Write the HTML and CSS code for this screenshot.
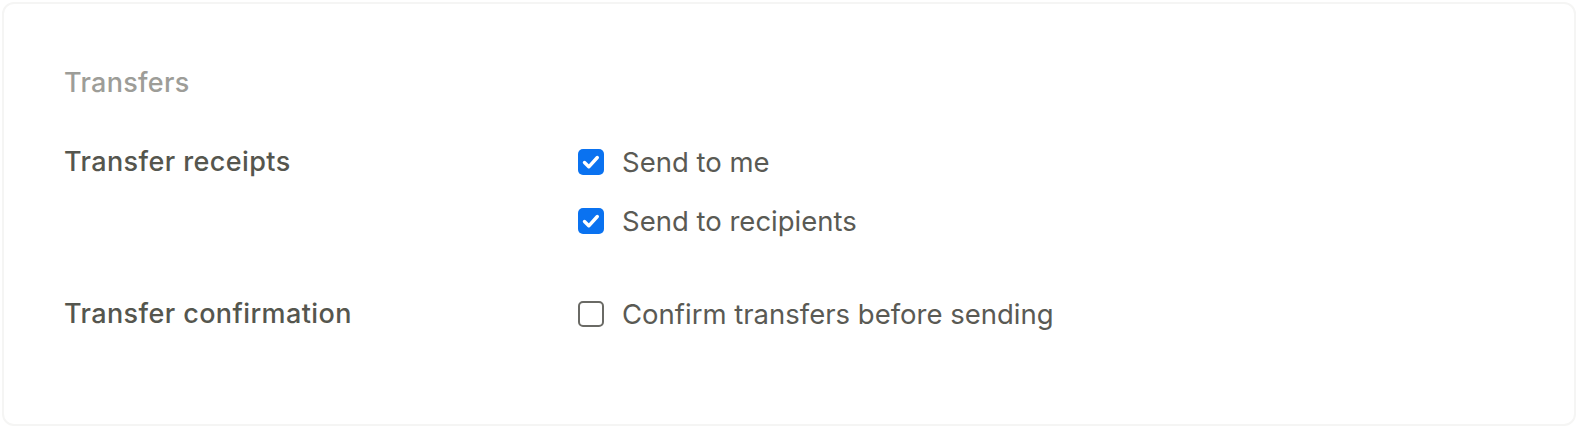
FILE: index.html
```html
<!DOCTYPE html>
<html lang="en">
<head>
<meta charset="utf-8">
<title>Transfers</title>
<link rel="stylesheet" href="styles.css">
</head>
<body>
<section class="card">
  <h2 class="title">Transfers</h2>
  <div class="row">
    <div class="label">Transfer receipts</div>
    <div class="options">
      <label class="opt">
        <span class="box checked"><svg viewBox="0 0 26 26" width="26" height="26"><path d="M6.5 13.5l4.3 4.3 8.5-9.3" fill="none" stroke="#fff" stroke-width="3.4" stroke-linecap="round" stroke-linejoin="round"/></svg></span>
        <span class="opt-text">Send to me</span>
      </label>
      <label class="opt">
        <span class="box checked"><svg viewBox="0 0 26 26" width="26" height="26"><path d="M6.5 13.5l4.3 4.3 8.5-9.3" fill="none" stroke="#fff" stroke-width="3.4" stroke-linecap="round" stroke-linejoin="round"/></svg></span>
        <span class="opt-text">Send to recipients</span>
      </label>
    </div>
  </div>
  <div class="row row-second">
    <div class="label">Transfer confirmation</div>
    <div class="options">
      <label class="opt">
        <span class="box"></span>
        <span class="opt-text">Confirm transfers before sending</span>
      </label>
    </div>
  </div>
</section>
</body>
</html>
```

FILE: styles.css
```css
html, body {
  margin: 0;
  background: #ffffff;
}
body {
  padding: 2px;
  font-family: "Inter", "Liberation Sans", sans-serif;
}
.card {
  box-sizing: border-box;
  height: 424px;
  border: 2px solid #f5f5f4;
  border-radius: 12px;
  padding: 64px 60px 0 60px;
  background: #fff;
}
.title {
  margin: 0;
  font-size: 27px;
  line-height: 30px;
  font-weight: 500;
  letter-spacing: 0.3px;
  color: #9d9d98;
}
.row {
  display: flex;
  align-items: flex-start;
  margin-top: 44px;
}
.row-second {
  margin-top: 53px;
}
.label {
  width: 514px;
  flex: none;
  font-size: 27px;
  line-height: 40px;
  font-weight: 500;
  letter-spacing: 0.4px;
  color: #55564e;
}
.options {
  display: flex;
  flex-direction: column;
  gap: 19px;
}
.opt {
  display: flex;
  align-items: center;
  gap: 18px;
  height: 40px;
  font-size: 27.5px;
  color: #5a5a54;
}
.box {
  box-sizing: border-box;
  width: 26px;
  height: 26px;
  border: 2px solid #6a6a65;
  border-radius: 5px;
  display: flex;
  align-items: center;
  justify-content: center;
}
.box.checked {
  border: none;
  background: #0a72f0;
}
```
